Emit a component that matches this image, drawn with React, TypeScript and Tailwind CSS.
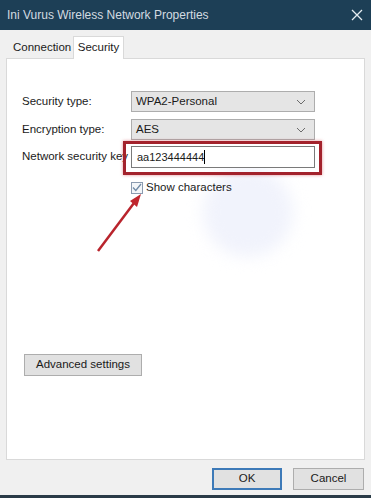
import React from "react";

function ChevronDown() {
  return (
    <svg width="10" height="6" viewBox="0 0 10 6" className="text-[#6b6b6b]">
      <path d="M1 1 L5 5 L9 1" fill="none" stroke="currentColor" strokeWidth="1" />
    </svg>
  );
}

function Combo({ value }: { value: string }) {
  return (
    <div className="w-[184px] h-[21px] bg-[#e5e5e5] border border-[#adadad] flex items-center justify-between pl-[4px] pr-[8px]">
      <span>{value}</span>
      <ChevronDown />
    </div>
  );
}

export default function App() {
  return (
    <div
      className="relative w-[371px] h-[498px] bg-[#f0f0f0] overflow-hidden flex flex-col text-[11.5px] text-[#1a1a1a]"
      style={{ fontFamily: '"Liberation Sans", Arial, sans-serif' }}
    >
      {/* title bar */}
      <div className="h-[30px] bg-[#1d3f56] flex items-center justify-between pl-[7px] pr-[8px] text-[#d3dbe1] text-[12px]">
        <span>Ini Vurus Wireless Network Properties</span>
        <svg width="12" height="12" viewBox="0 0 12 12">
          <path d="M1 1 L11 11 M11 1 L1 11" stroke="#e6ecf0" strokeWidth="1.3" />
        </svg>
      </div>

      {/* tabs */}
      <div className="flex items-end h-[28px] px-[6px] relative z-10">
        <div className="h-[21px] pl-[7px] flex items-center w-[67px]">Connection</div>
        <div className="h-[23px] w-[51px] bg-white border border-b-0 border-[#d9d9d9] flex items-center justify-center -mb-[1px]">
          Security
        </div>
      </div>

      {/* panel */}
      <div className="mx-[6px] h-[402px] bg-white border border-[#d9d9d9] relative">
        {/* watermark */}
        <div className="absolute left-[196px] top-[108px] w-[90px] h-[90px] rounded-full bg-[#f1f3fc] blur-[8px]" />

        <div className="relative pl-[15px] pt-[32px] flex flex-col">
          <div className="flex items-center h-[21px]">
            <span className="w-[109px]">Security type:</span>
            <Combo value="WPA2-Personal" />
          </div>
          <div className="flex items-center h-[21px] mt-[7px]">
            <span className="w-[109px]">Encryption type:</span>
            <Combo value="AES" />
          </div>
          <div className="flex items-center h-[22px] mt-[6px]">
            <span className="w-[109px] whitespace-nowrap">Network security key</span>
            <div className="relative">
              <div className="w-[184px] h-[22px] bg-white border border-[#7a7a7a] flex items-center pl-[5px] text-[11px]">
                <span>aa123444444</span>
                <span className="w-px h-[14px] bg-black" />
              </div>
              <div className="absolute -left-[8px] -top-[5px] w-[199px] h-[34px] border-[3px] border-[#a3222c] shadow-[0_0_3px_rgba(200,30,40,0.5)]" />
            </div>
          </div>
          <div className="flex items-center mt-[13px] ml-[109px] h-[13px]">
            <div className="w-[12px] h-[12px] border border-[#8a9bb0] bg-[#f3f6f9] flex items-center justify-center">
              <svg width="10" height="9" viewBox="0 0 10 9">
                <path d="M1 4.5 L3.8 7.5 L9 1" fill="none" stroke="#6f8aa6" strokeWidth="1.3" />
              </svg>
            </div>
            <span className="ml-[3px]">Show characters</span>
          </div>
          <div className="mt-[160px] ml-[2px] w-[118px] h-[22px] bg-[#e1e1e1] border border-[#adadad] flex items-center justify-center">
            Advanced settings
          </div>
        </div>

        {/* arrow */}
        <svg className="absolute left-[80px] top-[130px]" width="70" height="70" viewBox="0 0 70 70">
          <path d="M11 62 L47 14" stroke="#b9242c" strokeWidth="2.5" fill="none" />
          <path d="M54 5 L43 12 L50 18 Z" fill="#c0262e" />
        </svg>
      </div>

      {/* bottom buttons */}
      <div className="flex justify-end gap-[11px] pr-[7px] mt-[8px]">
        <div className="w-[70px] h-[22px] bg-[#e1e1e1] border-2 border-[#3d7ab8] flex items-center justify-center">OK</div>
        <div className="w-[71px] h-[22px] bg-[#e1e1e1] border border-[#adadad] flex items-center justify-center">Cancel</div>
      </div>
      <div className="mt-auto h-[3px] bg-[#2a3b47]" />
    </div>
  );
}
